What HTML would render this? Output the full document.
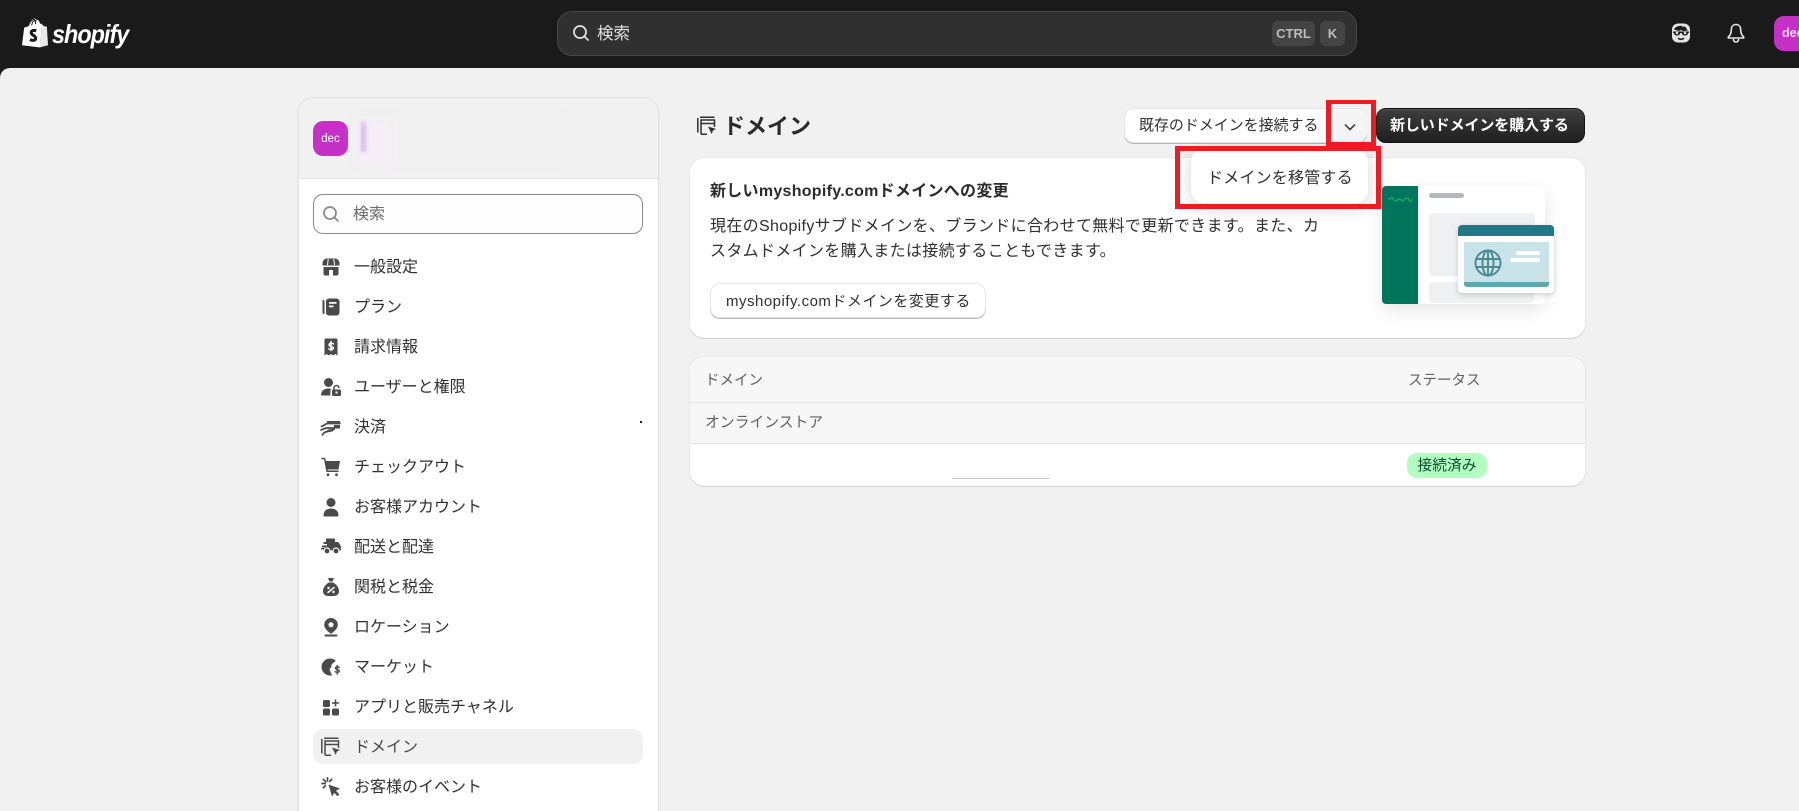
<!DOCTYPE html>
<html lang="ja"><head><meta charset="utf-8"><title>ドメイン</title>
<style>
*{box-sizing:border-box}
html,body{margin:0;padding:0;width:1799px;height:811px;overflow:hidden;background:#1a1a1a}
body{position:relative;font-family:"Liberation Sans","Noto Sans CJK JP",sans-serif;color:#303030;font-size:16px}
.a{position:absolute;white-space:nowrap}
svg{position:absolute;display:block;overflow:visible}
.main{position:absolute;left:0;top:68px;width:1799px;height:743px;background:#f1f1f1;border-radius:10px 0 0 0}
.side{position:absolute;left:298px;top:97px;width:361px;height:730px;background:#fff;border:1px solid #e3e3e3;border-radius:16px;box-shadow:0 1px 2px rgba(0,0,0,.08);overflow:hidden}
.sh{position:absolute;left:0;top:0;width:100%;height:81px;background:#f1f1f1;border-bottom:1px solid #e0e0e0}
.nav{position:absolute;left:354px;height:24px;line-height:24px;font-size:16px;white-space:nowrap;color:#303030}
.ic{width:20px;height:20px;left:321px;fill:#4a4a4a}
.btn{position:absolute;background:#fff;border-radius:10px;border:1px solid #e6e6e6;box-shadow:0 1px 0 #b5b5b5;font-size:15px;white-space:nowrap;height:35px;line-height:34px}
.card{position:absolute;background:#fff;border-radius:14px;box-shadow:0 1px 0 #cfcfcf,0 0 0 1px #e8e8e8}
.red{position:absolute;border-style:solid;border-color:#ed1c24}
</style></head><body>

<!-- top bar -->
<svg style="left:21px;top:18px" width="27" height="30" viewBox="0 0 27 30">
<path fill="#fff" d="M1 27.3 3.2 9.6 7 8.4C7.8 4.4 10.4.7 13 .6c1-.1 1.7.3 2.2 1 2-.2 3.400 1.800 3.900 4.300l1.500-.4L19.400 29.500z" />
<path fill="#e8e8e8" d="M20.600 5.900 23 8.200l3 .4-.1.600 1.100 18.100-7.600 1.900z"/>
<path fill="none" stroke="#1a1a1a" stroke-width="1" d="M7.500 8.200C8.200 5 10.300 1.700 12.800 1.500c1.400 0 1.700 1.500 1.800 4.500M10.600 7.300c.5-2.500 1.800-4.400 3.300-5M14.500 6.200c0-1.500-.1-3 .8-4"/>
<path fill="none" stroke="#1a1a1a" stroke-width="3" d="M15.200 12.800c-2.500-1-5-.2-5 1.900 0 2.500 4.500 2.800 4.500 5.400 0 2.300-3 3-5.700 1.500"/>
</svg>
<div class="a" style="left:52px;top:16px;font:italic bold 26px/36px 'Liberation Sans',sans-serif;color:#fff;letter-spacing:-1.1px;transform-origin:left center;transform:scaleX(.9)">shopify</div>

<div class="a" style="left:557px;top:11px;width:800px;height:45px;background:#303030;border:1px solid #484848;border-radius:15px"></div>
<svg style="left:572px;top:24px" width="18" height="18" viewBox="0 0 18 18" fill="none" stroke="#e3e3e3" stroke-width="1.700" stroke-linecap="round"><circle cx="8" cy="8" r="6"/><path d="M12.500 12.500 16 16"/></svg>
<div class="a" style="left:597px;top:22px;font-size:16.500px;line-height:24px;color:#e3e3e3">検索</div>
<div class="a" style="left:1272px;top:21px;width:43px;height:25px;background:#444;border-radius:6px;color:#bdbdbd;font-size:13px;font-weight:bold;line-height:25px;text-align:center">CTRL</div>
<div class="a" style="left:1320px;top:21px;width:25px;height:25px;background:#444;border-radius:6px;color:#bdbdbd;font-size:13px;font-weight:bold;line-height:25px;text-align:center">K</div>

<svg style="left:1672px;top:23px" width="18" height="20" viewBox="0 0 18 20">
<rect x="0" y="0.500" width="18" height="19" rx="6" fill="#e3e3e3"/>
<path fill="#1a1a1a" d="M2 6.500C3 3.500 7 2.500 11 3l-1.500 1.500L13 3.200l1.500 2.500L16 7.500l-5 .5-2-1-2 1z"/>
<path fill="#1a1a1a" d="M1 8.500h16v1.200l-1 .3c-.2 1.800-1.400 2.500-3 2.500-1.700 0-3-.8-3.300-2.500H8.300C8 11.700 6.700 12.500 5 12.500c-1.600 0-2.800-.7-3-2.500l-1-.3z"/>
<circle cx="5" cy="10" r="1.300" fill="#e3e3e3"/><circle cx="13" cy="10" r="1.300" fill="#e3e3e3"/>
<path d="M6 15.300c2 1.400 4 1.400 6 0" fill="none" stroke="#1a1a1a" stroke-width="1.500"/>
</svg>
<svg style="left:1727px;top:23px" width="18" height="20" viewBox="0 0 18 20" fill="none" stroke="#e8e8e8" stroke-width="1.600" stroke-linejoin="round">
<path d="M9 1.500c-3.200 0-4.700 2.500-4.700 5.300 0 3.500-.8 5-3 7.200v1h15.400v-1c-2.200-2.200-3-3.700-3-7.200 0-2.800-1.500-5.300-4.700-5.300z"/><path d="M6.500 16v.5a2.500 2.500 0 0 0 5 0V16"/></svg>
<div class="a" style="left:1774px;top:16px;width:40px;height:35px;background:#c730c7;border-radius:10px;color:#f6dcf6;font-size:12.500px;font-weight:bold;line-height:35px;padding-left:8px">dec</div>

<div class="main"></div>

<!-- sidebar -->
<div class="side"><div class="sh"></div></div>
<div class="a" style="left:313px;top:121px;width:35px;height:35px;background:#c730c7;border-radius:10px;color:#fff;font-size:11.500px;line-height:36px;text-align:center">dec</div>
<div class="a" style="left:356px;top:114px;width:215px;height:50px;background:#f0f0f0;filter:blur(3px)"></div>
<div class="a" style="left:356px;top:120px;width:38px;height:44px;background:#f5eef7;filter:blur(5px)"></div>
<div class="a" style="left:361px;top:122px;width:5px;height:30px;background:#dcbcec;filter:blur(1.500px)"></div>

<div class="a" style="left:313px;top:194px;width:330px;height:40px;background:#fdfdfd;border:1px solid #8a8a8a;border-radius:10px"></div>
<svg style="left:322px;top:205px" width="18" height="18" viewBox="0 0 18 18" fill="none" stroke="#8a8a8a" stroke-width="1.700" stroke-linecap="round"><circle cx="8" cy="8" r="6"/><path d="M12.500 12.500 16 16"/></svg>
<div class="a" style="left:353px;top:203px;font-size:16px;line-height:24px;color:#6b6b6b">検索</div>

<div class="a" style="left:313px;top:729px;width:330px;height:35px;background:#f1f1f1;border-radius:10px"></div>
<div class="a" style="left:640px;top:421px;width:2px;height:2px;background:#222"></div>

<div class="nav" style="top:256px">一般設定</div>
<div class="nav" style="top:296px">プラン</div>
<div class="nav" style="top:336px">請求情報</div>
<div class="nav" style="top:376px">ユーザーと権限</div>
<div class="nav" style="top:416px">決済</div>
<div class="nav" style="top:456px">チェックアウト</div>
<div class="nav" style="top:496px">お客様アカウント</div>
<div class="nav" style="top:536px">配送と配達</div>
<div class="nav" style="top:576px">関税と税金</div>
<div class="nav" style="top:616px">ロケーション</div>
<div class="nav" style="top:656px">マーケット</div>
<div class="nav" style="top:696px">アプリと販売チャネル</div>
<div class="nav" style="top:736px;color:#4a4a4a">ドメイン</div>
<div class="nav" style="top:776px">お客様のイベント</div>

<!-- icons -->
<svg class="ic" style="top:257px" viewBox="0 0 20 20"><path d="M6 1.500h8c2.600 0 4.500 2.300 4.500 5v2h-17v-2c0-2.700 1.900-5 4.500-5z"/><path d="M2.500 10h15v6.500a2 2 0 0 1-2 2h-11a2 2 0 0 1-2-2z"/><path fill="#fff" d="M8 13h4v5.500H8zM1 8.500h18V10H1z"/><path fill="none" stroke="#fff" stroke-width="1" d="M7.200 2 6.500 8M12.800 2l.7 6"/></svg>
<svg class="ic" style="top:297px" viewBox="0 0 20 20"><rect x="1.500" y="3" width="2" height="14" rx="1"/><rect x="5" y="1.500" width="13.500" height="17" rx="3"/><path fill="#fff" d="M8 5h7.500v1.700H8zM8 8.500h4.500v1.700H8z"/></svg>
<svg class="ic" style="top:337px" viewBox="0 0 20 20"><path d="M5 1.500h10A1.500 1.500 0 0 1 16.500 3v15.500l-2.200-1.500-2 1.500L10 17l-2.300 1.500-2-1.500-2.200 1.500V3A1.500 1.500 0 0 1 5 1.500z"/><path fill="none" stroke="#fff" stroke-width="1.500" stroke-linecap="round" d="M12.400 7c-.5-1-3.900-1.200-4.300.6-.4 2.400 4.500 1.300 4.200 3.700-.3 1.600-3.700 1.500-4.500.5M10 4.500v9"/></svg>
<svg class="ic" style="top:377px" viewBox="0 0 20 20"><circle cx="7.500" cy="5.500" r="4.500"/><path d="M0 18.500c0-4.500 3-7 7.500-7 1 0 2 .1 2.800.4-.6.800-.9 1.600-.9 2.500v4.100z"/><rect x="11" y="12.500" width="9" height="6.500" rx="1.500"/><path fill="none" stroke="#4a4a4a" stroke-width="1.500" d="M13 12.500v-1.500a2.500 2.500 0 0 1 5 0"/><rect x="14.500" y="14.500" width="2" height="2" fill="#fff"/></svg>
<svg class="ic" style="top:417px" viewBox="0 0 20 20"><path fill="none" stroke="#4a4a4a" stroke-width="1.700" stroke-linecap="round" d="M0.500 9.500 6 6.500h13M1.500 18c1-2.500 3-3.200 5-3.500l5-1M0 13c2-.8 4-2 6-2h6.500c.8 0 1 1.400 0 1.600L7 13.500"/><path d="M6 4h13v1.700H6zM13 8h6v3.500h-6z"/></svg>
<svg class="ic" style="top:457px" viewBox="0 0 20 20"><path d="M3.500 4h15.500l-1.500 8.500h-12z"/><path fill="none" stroke="#4a4a4a" stroke-width="1.500" stroke-linecap="round" d="M1 1.500h1.500c1 0 1.300.5 1.500 1.500l2 11.300h11"/><circle cx="7" cy="17.800" r="1.400"/><circle cx="15.500" cy="17.800" r="1.400"/></svg>
<svg class="ic" style="top:497px" viewBox="0 0 20 20"><circle cx="10" cy="5.500" r="4.500"/><path d="M2.500 18.500c0-4.500 3-7 7.500-7s7.500 2.500 7.500 7c0 .5-.5 1-1 1h-13c-.5 0-1-.5-1-1z"/></svg>
<svg class="ic" style="top:536px" viewBox="0 0 20 20"><path d="M5 2.500h8a1 1 0 0 1 1 1V6h2.500c.6 0 1 .2 1.300.7l2 3.300v4.500h-16v-3H1V9.500h5V8H2.500V6H5z"/><path d="M0 12h5v1.500H0z"/><circle cx="6" cy="15" r="3" stroke="#fff" stroke-width="1.200"/><circle cx="15" cy="15" r="3" stroke="#fff" stroke-width="1.200"/></svg>
<svg class="ic" style="top:577px" viewBox="0 0 20 20"><path d="M7 1h6l-1.500 3.500h-3z"/><path d="M8 5.500h4c3 1.500 6 5 6 8.500 0 3.500-2.500 5-5.500 5h-5C4.500 19 2 17.500 2 14c0-3.500 3-7 6-8.500z"/><path fill="none" stroke="#fff" stroke-width="1.500" stroke-linecap="round" d="M7 15.500l6-5"/><circle cx="7.500" cy="11" r="1.200" fill="#fff"/><circle cx="12.500" cy="15" r="1.200" fill="#fff"/></svg>
<svg class="ic" style="top:617px" viewBox="0 0 20 20"><path fill-rule="evenodd" d="M10 1a6.800 6.800 0 0 1 6.800 6.800c0 3.700-3.700 7-6.800 9-3.100-2-6.800-5.300-6.800-9A6.800 6.800 0 0 1 10 1zm0 4.300a2.500 2.500 0 1 0 0 5 2.500 2.500 0 0 0 0-5z"/><rect x="3.500" y="17.500" width="13" height="2" rx="1"/></svg>
<svg class="ic" style="top:657px" viewBox="0 0 20 20"><path d="M9 1.500c2.300 0 4.300.8 5.800 2.200l-3.300 2.800c-1 .6-1.500 2.300-1 3.500L8.500 12l1 3 1.600 3.300c-.6.200-1.400.2-2.100.2A8.500 8.500 0 0 1 9 1.500z"/><path fill="none" stroke="#4a4a4a" stroke-width="1.400" stroke-linecap="round" d="M18.300 10.500c-.5-1-3.500-1-3.800.5-.3 2 4 1.200 3.800 3.200-.2 1.500-3.300 1.400-4 .4M16.200 8.500v8.500"/></svg>
<svg class="ic" style="top:697px" viewBox="0 0 20 20"><rect x="2" y="3" width="7" height="7" rx="1.500"/><rect x="2" y="11.500" width="7" height="7" rx="1.500"/><rect x="11" y="11.500" width="7" height="7" rx="1.500"/><path d="M13.700 2.500h1.600v2.700H18v1.600h-2.700v2.700h-1.600V6.800H11V5.200h2.700z"/></svg>
<svg class="ic" style="top:737px" viewBox="0 0 20 20"><path fill="none" stroke="#4a4a4a" stroke-width="1.500" d="M.8 2v14.500M3 1.300h14.500M4 18.200V4h13.500v7M4 7.500h13.500M4 18.200h6"/><path d="M11 10.500l8 2.500-3 1.500-1.300 3.500z"/></svg>
<svg class="ic" style="top:777px" viewBox="0 0 20 20"><path d="M7.500 7.500l11.500 4-4 2.300 3.300 3.700-1.700 1.700-3.500-3.500-2 4z"/><path fill="none" stroke="#4a4a4a" stroke-width="1.700" stroke-linecap="round" d="M6.500.8v3.200M1 6.500h3.200M2.300 2.300l2.300 2.300M10.800 2.300 8.700 4.500M2.300 10.800l2.200-2.200"/></svg>

<!-- heading -->
<svg style="left:697px;top:116px" width="20" height="20" viewBox="0 0 20 20"><path fill="none" stroke="#303030" stroke-width="1.500" d="M.8 2v14.500M3 1.300h14.500M4 18.200V4h13.500v7M4 7.500h13.500M4 18.200h6"/><path fill="#303030" d="M11 10.500l8 2.500-3 1.500-1.300 3.500z"/></svg>
<div class="a" style="left:723px;top:111px;font-size:22px;line-height:32px;font-weight:bold;color:#2b2b2b">ドメイン</div>

<div class="btn" style="left:1124px;top:108px;width:243px"></div>
<div class="a" style="left:1330px;top:109px;width:37px;height:33px;background:#f5f5f5;border-left:1px solid #e3e3e3;border-radius:0 10px 10px 0"></div>
<div class="a" style="left:1139px;top:114px;font-size:15px;line-height:24px;letter-spacing:-.05px">既存のドメインを接続する</div>
<svg style="left:1344px;top:123px" width="12" height="9" viewBox="0 0 12 9"><path d="M1.500 2 6 6.500 10.500 2" fill="none" stroke="#404040" stroke-width="1.600" stroke-linecap="round" stroke-linejoin="round"/></svg>
<div class="a" style="left:1376px;top:108px;width:209px;height:35px;background:linear-gradient(#3e3e3e,#1f1f1f);border:1px solid #111;border-radius:10px;box-shadow:inset 0 1px 0 #555;color:#fff;font-size:15px;font-weight:bold;line-height:34px;padding-left:13px;letter-spacing:-.1px">新しいドメインを購入する</div>

<!-- banner card -->
<div class="card" style="left:690px;top:158px;width:895px;height:180px"></div>
<div class="a" style="left:710px;top:180px;font-size:16px;line-height:24px;font-weight:bold;color:#2b2b2b;letter-spacing:.28px">新しいmyshopify.comドメインへの変更</div>
<div class="a" style="left:710px;top:214px;font-size:16px;line-height:25px;color:#303030;letter-spacing:.33px">現在のShopifyサブドメインを、ブランドに合わせて無料で更新できます。また、カ<br>スタムドメインを購入または接続することもできます。</div>
<div class="btn" style="left:710px;top:283px;width:276px;padding-left:15px;text-align:left;line-height:35px;letter-spacing:.5px">myshopify.comドメインを変更する</div>

<!-- illustration -->
<div class="a" style="left:1382px;top:186px;width:163px;height:118px;background:#fff;border-radius:4px;box-shadow:0 6px 18px rgba(0,0,0,.1);overflow:hidden"><div style="position:absolute;left:0;top:0;width:36px;height:118px;background:#00755c"></div></div>
<svg style="left:1388px;top:196px" width="26" height="6" viewBox="0 0 26 6"><path d="M1 4c2-3 3-3 5 0s3-1 5-1 3 3 5 1 3-3 5 0 2 0 3-1" fill="none" stroke="#15a86f" stroke-width="1.500"/></svg>
<div class="a" style="left:1429px;top:193px;width:35px;height:5px;border-radius:3px;background:#b4b6bb"></div>
<div class="a" style="left:1429px;top:213px;width:106px;height:63px;border-radius:4px;background:#eef0f2"></div>
<div class="a" style="left:1429px;top:282px;width:105px;height:21px;border-radius:4px;background:#eef0f2"></div>
<div class="a" style="left:1458px;top:225px;width:96px;height:68px;background:#fff;border-radius:4px;box-shadow:0 2px 6px rgba(0,0,0,.18)"></div>
<div class="a" style="left:1458px;top:225px;width:96px;height:11px;background:#227785;border-radius:4px 4px 0 0"></div>
<div class="a" style="left:1464px;top:242px;width:85px;height:45px;background:#c9e4e8;border-radius:0 0 3px 3px"></div>
<div class="a" style="left:1464px;top:282px;width:85px;height:5px;background:#5da8b3;border-radius:0 0 3px 3px"></div>
<svg style="left:1474px;top:249px" width="28" height="28" viewBox="0 0 28 28" fill="none" stroke="#4c8b94" stroke-width="1.900"><circle cx="14" cy="14" r="12.500"/><ellipse cx="14" cy="14" rx="5.500" ry="12.500"/><path d="M14 1.500v25M2.500 10h23M2.500 18h23"/></svg>
<div class="a" style="left:1516px;top:251px;width:24px;height:4px;border-radius:2px;background:#fff"></div>
<div class="a" style="left:1510px;top:258px;width:30px;height:4px;border-radius:2px;background:#fff"></div>

<!-- popover -->
<div class="a" style="left:1191px;top:148px;width:177px;height:56px;background:#fff;border-radius:14px;box-shadow:0 4px 18px rgba(0,0,0,.16)"></div>
<div class="a" style="left:1207px;top:167px;font-size:16px;line-height:24px;letter-spacing:.2px">ドメインを移管する</div>

<!-- table -->
<div class="card" style="left:690px;top:357px;width:895px;height:129px;overflow:hidden">
<div style="position:absolute;left:0;top:0;width:100%;height:87px;background:#f7f7f7"></div>
<div style="position:absolute;left:0;top:45px;width:100%;height:1px;background:#e3e3e3"></div>
<div style="position:absolute;left:0;top:86px;width:100%;height:1px;background:#e3e3e3"></div>
</div>
<div class="a" style="left:705px;top:369px;font-size:14.500px;line-height:24px;color:#616161">ドメイン</div>
<div class="a" style="left:1408px;top:369px;font-size:14.500px;line-height:24px;color:#616161">ステータス</div>
<div class="a" style="left:705px;top:411px;font-size:14.800px;line-height:24px;color:#616161">オンラインストア</div>
<div class="a" style="left:1407px;top:453px;width:80px;height:25px;border-radius:10px;background:#b4fdc0;color:#0c5132;font-size:14.800px;line-height:26px;text-align:center">接続済み</div>
<div class="a" style="left:952px;top:478px;width:98px;height:1px;background:#c8c8c8"></div>

<!-- annotations -->
<div class="red" style="left:1326px;top:100px;width:50px;height:46px;border-width:4px 5px"></div>
<div class="red" style="left:1175px;top:146px;width:206px;height:63px;border-width:5px"></div>
</body></html>
